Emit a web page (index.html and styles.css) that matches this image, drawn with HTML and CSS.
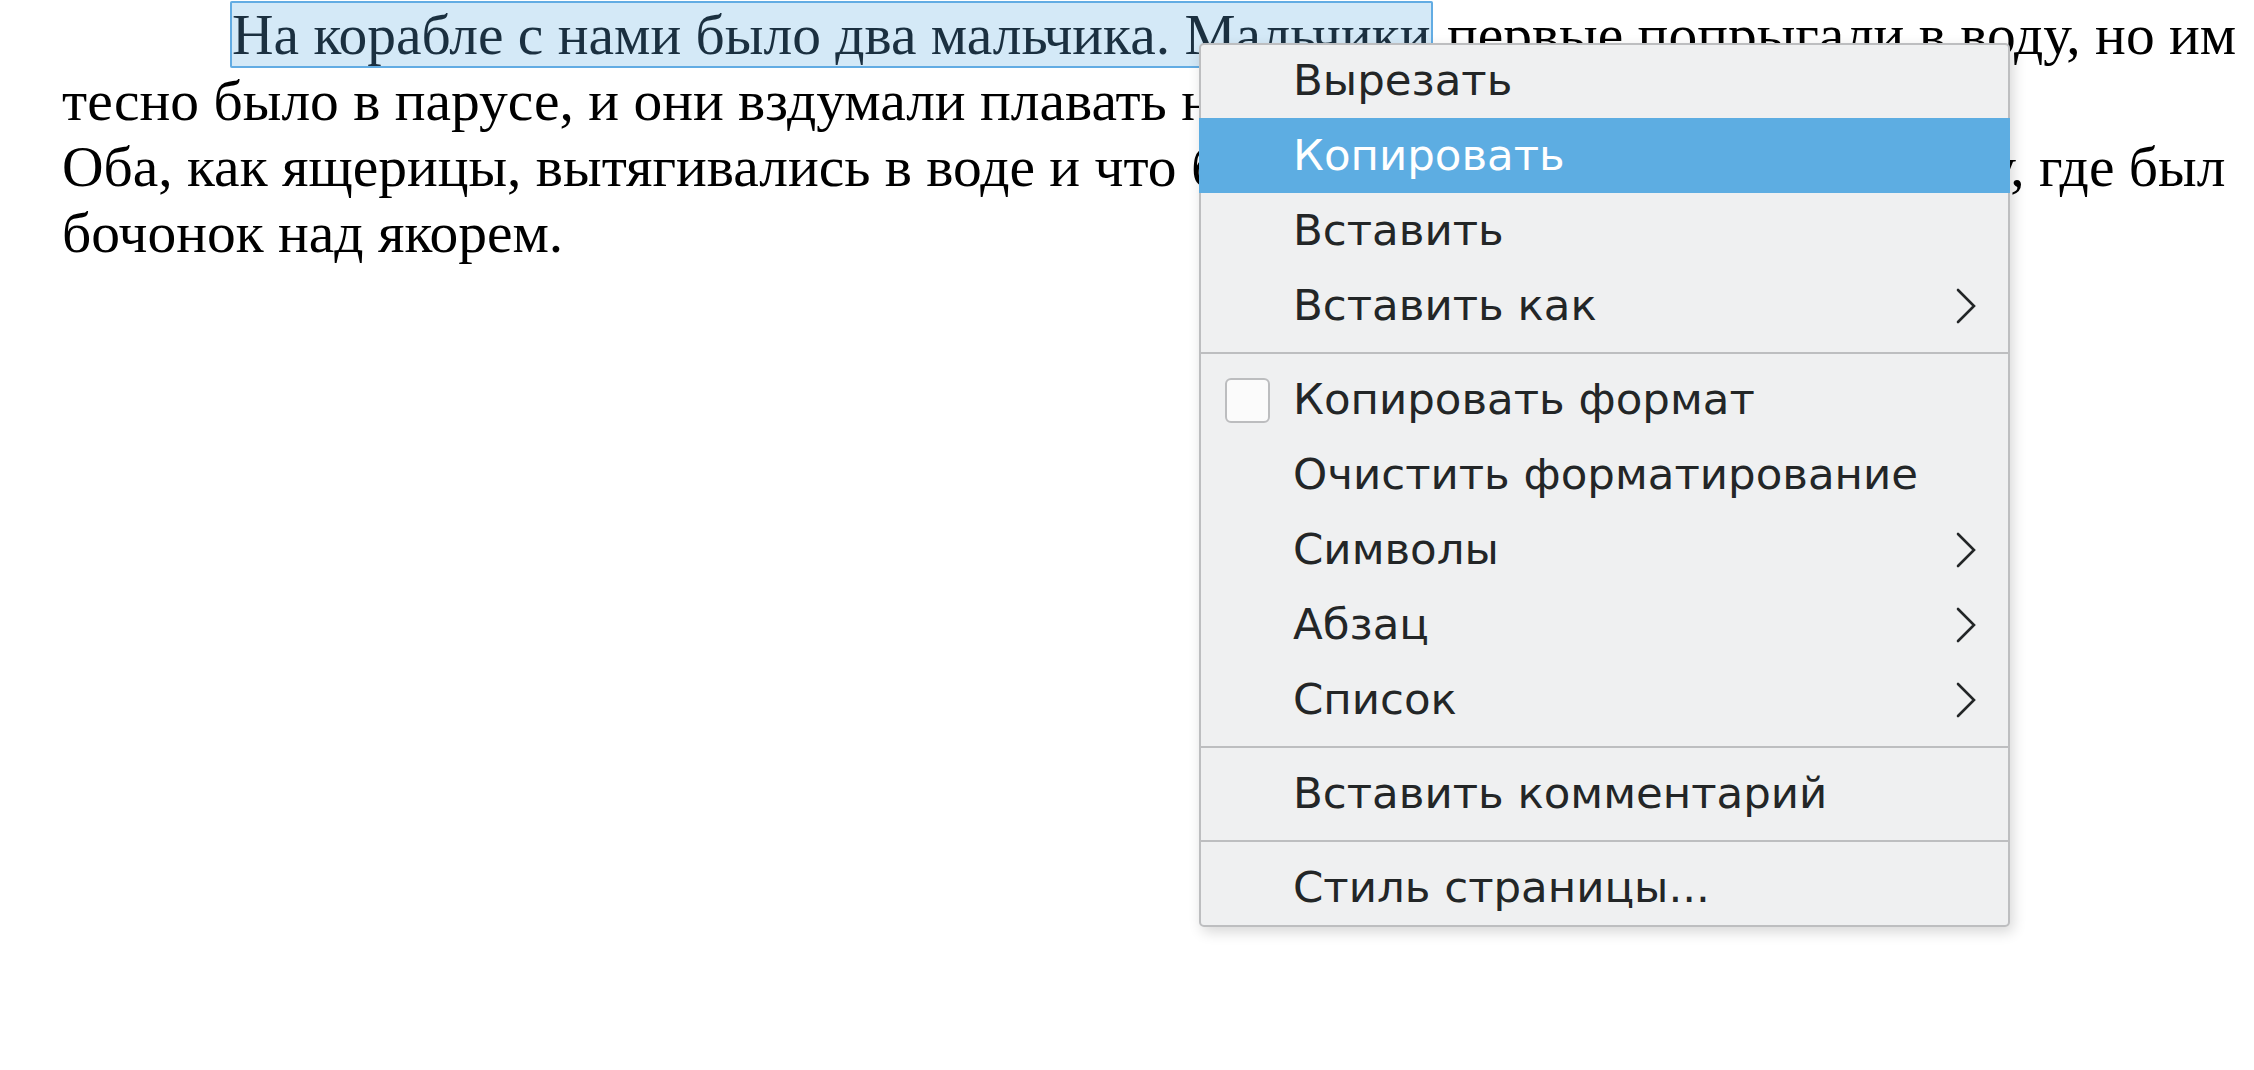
FILE: index.html
```html
<!DOCTYPE html>
<html lang="ru">
<head>
<meta charset="utf-8">
<title>Документ</title>
<link rel="stylesheet" href="styles.css">
</head>
<body>
<div class="doc">
  <div class="line first"><span class="sel">На корабле с нами было два мальчика. Мальчики</span> первые попрыгали в воду, но им</div>
  <div class="line">тесно было в парусе, и они вздумали плавать наперегонки в открытом море.</div>
  <div class="line">Оба, как ящерицы, вытягивались в воде и что было силы поплыли к тому месту, где был</div>
  <div class="line">бочонок над якорем.</div>
</div>

<div class="menu">
  <div class="item"><span class="label">Вырезать</span></div>
  <div class="item active"><span class="label">Копировать</span></div>
  <div class="item"><span class="label">Вставить</span></div>
  <div class="item"><span class="label">Вставить как</span><svg class="chev" viewBox="0 0 20 36" width="20" height="36"><polyline points="2,2 18,18 2,34"/></svg></div>
  <div class="sep"></div>
  <div class="item"><span class="check"></span><span class="label">Копировать формат</span></div>
  <div class="item"><span class="label">Очистить форматирование</span></div>
  <div class="item"><span class="label">Символы</span><svg class="chev" viewBox="0 0 20 36" width="20" height="36"><polyline points="2,2 18,18 2,34"/></svg></div>
  <div class="item"><span class="label">Абзац</span><svg class="chev" viewBox="0 0 20 36" width="20" height="36"><polyline points="2,2 18,18 2,34"/></svg></div>
  <div class="item"><span class="label">Список</span><svg class="chev" viewBox="0 0 20 36" width="20" height="36"><polyline points="2,2 18,18 2,34"/></svg></div>
  <div class="sep"></div>
  <div class="item"><span class="label">Вставить комментарий</span></div>
  <div class="sep"></div>
  <div class="item"><span class="label">Стиль страницы...</span></div>
</div>
</body>
</html>
```

FILE: styles.css
```css
html, body {
  margin: 0;
  padding: 0;
  background: #ffffff;
  overflow: hidden;
  width: 2254px;
  height: 1070px;
}

.doc {
  padding: 2px 0 0 62px;
  font-family: "Liberation Serif", "Times New Roman", serif;
  font-size: 57.5px;
  line-height: 66px;
  color: #000000;
}

.line {
  white-space: nowrap;
}

.line.first {
  text-indent: 168px;
}

.sel {
  background: #d4e9f7;
  border: 2px solid #62ace3;
  border-radius: 2px;
  color: #1b3040;
}

.menu {
  position: absolute;
  left: 1199px;
  top: 43px;
  width: 811px;
  box-sizing: border-box;
  background: #eff0f1;
  border: 2px solid #bdbec0;
  border-radius: 5px;
  box-shadow: 3px 5px 14px rgba(0, 0, 0, 0.16);
  font-family: "DejaVu Sans", "Noto Sans", sans-serif;
  font-size: 43.5px;
  color: #232627;
}

.item {
  position: relative;
  display: flex;
  align-items: center;
  height: 75px;
  line-height: 75px;
  margin: 0 -2px;
  padding: 0 34px 0 94px;
  white-space: nowrap;
}

.item:first-child {
  margin-top: -2px;
}

.item.active {
  background: #5dade2;
  color: #ffffff;
}

.label {
  flex: 1;
}

.check {
  position: absolute;
  left: 26px;
  top: 16px;
  width: 45px;
  height: 45px;
  box-sizing: border-box;
  background: #fbfbfb;
  border: 2px solid #bcbdbf;
  border-radius: 6px;
}

.chev {
  display: block;
  flex: none;
}

.chev polyline {
  fill: none;
  stroke: #232627;
  stroke-width: 2.6;
  stroke-linecap: round;
  stroke-linejoin: miter;
}

.sep {
  height: 2px;
  margin: 9px -2px 8px;
  background: #bdbec0;
}
```
